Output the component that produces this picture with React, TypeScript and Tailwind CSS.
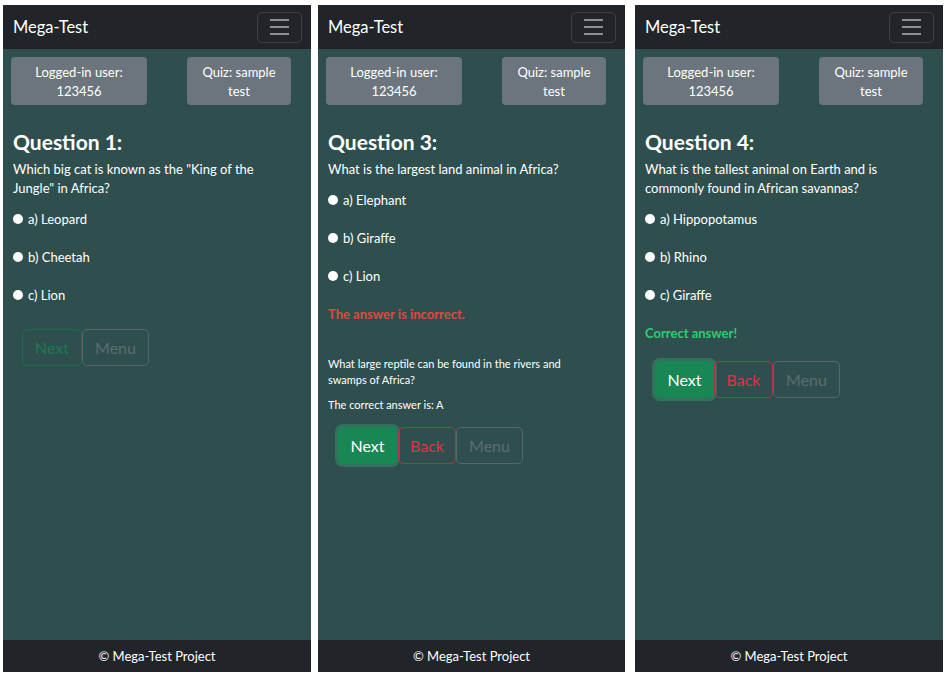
import React from "react";

const font = { fontFamily: "Lato, 'Open Sans', sans-serif" };

function Navbar() {
  return (
    <div className="h-[44px] bg-[#212529] flex items-center justify-between pl-[10px] pr-[9px] shrink-0">
      <span className="text-[16.5px] text-white pt-[1px]">Mega-Test</span>
      <div className="w-[45px] h-[31px] border border-[rgba(255,255,255,0.12)] rounded-[5px] flex flex-col items-center justify-center gap-[5px]">
        <span className="block w-[19px] h-[2px] bg-[#8c8f92]" />
        <span className="block w-[19px] h-[2px] bg-[#8c8f92]" />
        <span className="block w-[19px] h-[2px] bg-[#8c8f92]" />
      </div>
    </div>
  );
}

function InfoRow() {
  return (
    <div className="flex mt-[8px] pl-[8px] h-[48px]">
      <div className="w-[136px] h-[48px] pt-[1px] bg-[#6c757d] rounded-[4px] flex flex-col items-center justify-center text-white text-[13px] leading-[19px]">
        <span>Logged-in user:</span>
        <span>123456</span>
      </div>
      <div className="w-[104px] h-[48px] pt-[1px] ml-[40px] bg-[#6c757d] rounded-[4px] flex flex-col items-center justify-center text-white text-[13px] leading-[19px]">
        <span>Quiz: sample</span>
        <span>test</span>
      </div>
    </div>
  );
}

function Footer() {
  return (
    <div className="h-[32px] pt-[1px] bg-[#212529] flex items-center justify-center text-white text-[13px] shrink-0">
      © Mega-Test Project
    </div>
  );
}

function Option({ label }: { label: string }) {
  return (
    <div className="h-[38px] flex items-center">
      <span className="w-[10px] h-[10px] rounded-full bg-white inline-block" />
      <span className="ml-[5px] text-[13px] text-white pt-[2px]">{label}</span>
    </div>
  );
}

export default function App() {
  return (
    <div className="w-[947px] h-[676px] bg-white flex pt-[5px]" style={font}>
      <div className="w-[308px] ml-[3px] h-[667px] bg-[#2f4f4f] flex flex-col">
        <Navbar />
        <InfoRow />
        <div className="flex-1 pl-[10px]">
          <div className="mt-[22px] h-[30px] leading-[30px] text-[21px] font-bold text-white">Question 1:</div>
          <div className="mt-[2px] pt-[1px] text-[13px] leading-[19px] text-white">
            <div>Which big cat is known as the "King of the</div>
            <div>Jungle" in Africa?</div>
          </div>
          <div className="mt-[2px]">
            <Option label="a) Leopard" />
            <Option label="b) Cheetah" />
            <Option label="c) Lion" />
          </div>
          <div className="mt-[15px] ml-[9px] flex">
            <div className="w-[60px] h-[37px] pt-[1px] border border-[#1d6b4d] rounded-[5px] flex items-center justify-center text-[16px] text-[#1c7a50]">Next</div>
            <div className="w-[67px] h-[37px] pt-[1px] border border-[#56676a] rounded-[5px] flex items-center justify-center text-[16px] text-[#5c6c6f]">Menu</div>
          </div>
        </div>
        <Footer />
      </div>

      <div className="w-[307px] ml-[7px] h-[667px] bg-[#2f4f4f] flex flex-col">
        <Navbar />
        <InfoRow />
        <div className="flex-1 pl-[10px]">
          <div className="mt-[22px] h-[30px] leading-[30px] text-[21px] font-bold text-white">Question 3:</div>
          <div className="mt-[2px] pt-[1px] text-[13px] leading-[19px] text-white">
            <div>What is the largest land animal in Africa?</div>
          </div>
          <div className="mt-[2px]">
            <Option label="a) Elephant" />
            <Option label="b) Giraffe" />
            <Option label="c) Lion" />
          </div>
          <div className="h-[38px] pt-[2px] flex items-center text-[13px] font-bold text-[#e2463f]">The answer is incorrect.</div>
          <div className="mt-[23px] text-[11px] leading-[16px] text-white">
            <div>What large reptile can be found in the rivers and</div>
            <div>swamps of Africa?</div>
          </div>
          <div className="mt-[9px] text-[11px] leading-[16px] text-white">The correct answer is: A</div>
          <div className="mt-[14px] ml-[10px] flex">
            <div className="w-[59px] h-[37px] pt-[1px] bg-[#198754] rounded-[5px] shadow-[0_0_0_3px_rgba(60,153,110,0.45)] flex items-center justify-center text-[16px] text-white">Next</div>
            <div className="w-[58px] ml-[1px] h-[37px] pt-[1px] border border-[#b3343f] rounded-[5px] flex items-center justify-center text-[16px] text-[#dc3545]">Back</div>
            <div className="w-[67px] h-[37px] pt-[1px] border border-[#56676a] rounded-[5px] flex items-center justify-center text-[16px] text-[#5c6c6f]">Menu</div>
          </div>
        </div>
        <Footer />
      </div>

      <div className="w-[308px] ml-[10px] h-[667px] bg-[#2f4f4f] flex flex-col">
        <Navbar />
        <InfoRow />
        <div className="flex-1 pl-[10px]">
          <div className="mt-[22px] h-[30px] leading-[30px] text-[21px] font-bold text-white">Question 4:</div>
          <div className="mt-[2px] pt-[1px] text-[13px] leading-[19px] text-white">
            <div>What is the tallest animal on Earth and is</div>
            <div>commonly found in African savannas?</div>
          </div>
          <div className="mt-[2px]">
            <Option label="a) Hippopotamus" />
            <Option label="b) Rhino" />
            <Option label="c) Giraffe" />
          </div>
          <div className="h-[38px] pt-[2px] flex items-center text-[13px] font-bold text-[#2ecc71]">Correct answer!</div>
          <div className="mt-[9px] ml-[10px] flex">
            <div className="w-[59px] h-[37px] pt-[1px] bg-[#198754] rounded-[5px] shadow-[0_0_0_3px_rgba(60,153,110,0.45)] flex items-center justify-center text-[16px] text-white">Next</div>
            <div className="w-[59px] h-[37px] pt-[1px] border border-[#b3343f] rounded-[5px] flex items-center justify-center text-[16px] text-[#dc3545]">Back</div>
            <div className="w-[67px] h-[37px] pt-[1px] border border-[#56676a] rounded-[5px] flex items-center justify-center text-[16px] text-[#5c6c6f]">Menu</div>
          </div>
        </div>
        <Footer />
      </div>
    </div>
  );
}
